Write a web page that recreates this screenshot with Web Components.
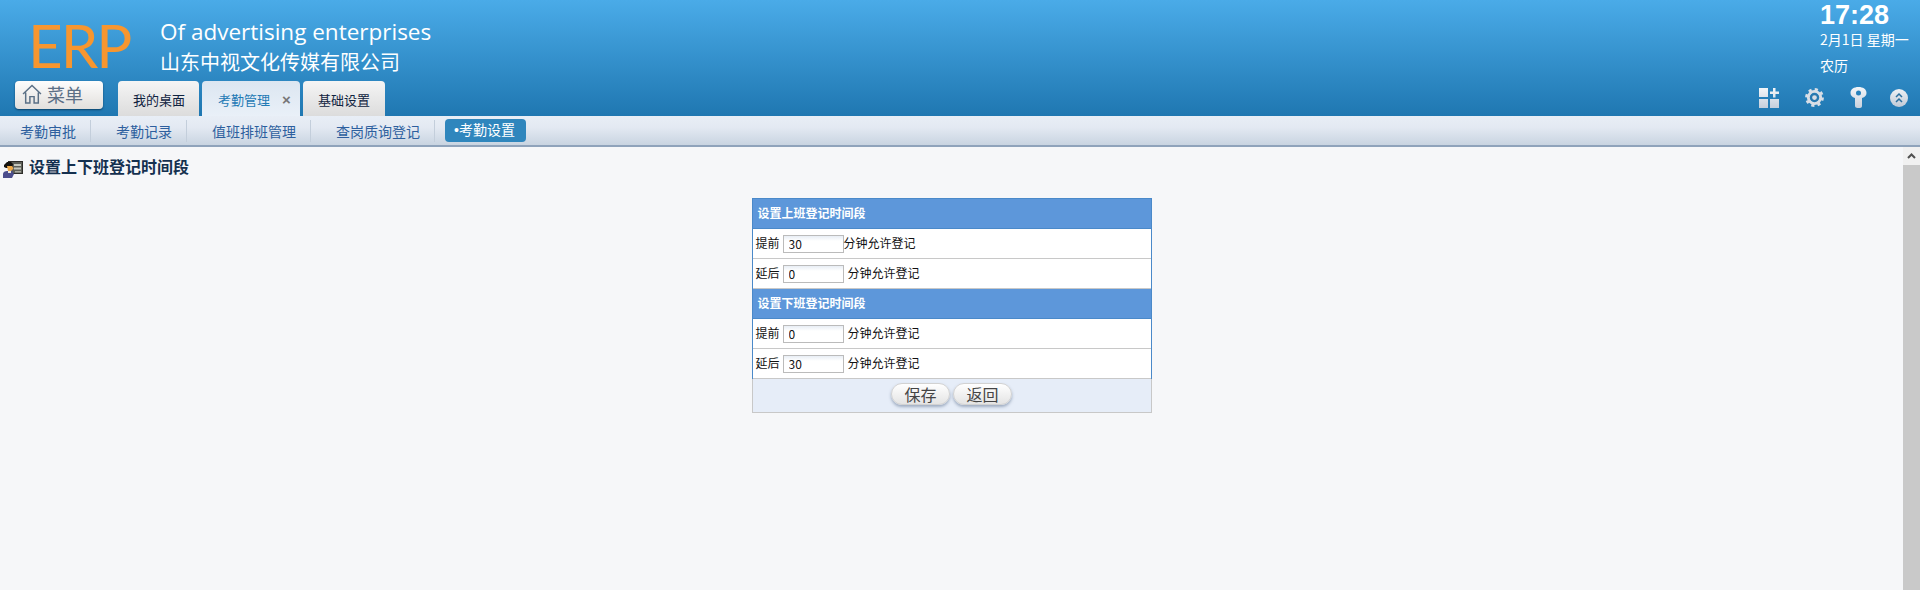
<!DOCTYPE html>
<html lang="zh">
<head>
<meta charset="utf-8">
<title>ERP</title>
<style>
  html, body {
    height: 100%;
    margin: 0;
    overflow: hidden;
  }

  body {
    font-family: 'Noto Sans CJK SC', sans-serif;
  }
</style>
</head>
<body>
<erp-app>
  <erp-header slot="header"></erp-header>
  <erp-subnav slot="subnav">
    <erp-subnav-item width="91">考勤审批</erp-subnav-item>
    <erp-subnav-item width="96">考勤记录</erp-subnav-item>
    <erp-subnav-item width="124">值班排班管理</erp-subnav-item>
    <erp-subnav-item width="124">查岗质询登记</erp-subnav-item>
    <erp-subnav-item active>•考勤设置</erp-subnav-item>
  </erp-subnav>
  <erp-page slot="page" title="设置上下班登记时间段">
    <erp-time-form>
      <erp-form-title>设置上班登记时间段</erp-form-title>
      <erp-form-row label="提前" value="30" tight></erp-form-row>
      <erp-form-row label="延后" value="0"></erp-form-row>
      <erp-form-title>设置下班登记时间段</erp-form-title>
      <erp-form-row label="提前" value="0"></erp-form-row>
      <erp-form-row label="延后" value="30" last></erp-form-row>
      <erp-form-actions>
        <erp-button>保存</erp-button>
        <erp-button>返回</erp-button>
      </erp-form-actions>
    </erp-time-form>
  </erp-page>
</erp-app>

<script>
// Small helper, every element here is only markup and styles
function shadow( host, html ) {
  const template = document.createElement( 'template' );
  template.innerHTML = html;
  const root = host.attachShadow( {mode: 'open'} );
  root.appendChild( template.content.cloneNode( true ) );
  return root;
}

class ErpApp extends HTMLElement {
  constructor() {
    super();
    shadow( this, `
      <style>
        :host {
          display: flex;
          flex-direction: column;
          height: 590px;
          width: 1920px;
        }

        .page {
          display: flex;
          flex: 1;
          min-height: 0;
        }
      </style>
      <slot name="header"></slot>
      <slot name="subnav"></slot>
      <div class="page">
        <slot name="page"></slot>
      </div>
    ` );
  }
}

class ErpHeader extends HTMLElement {
  constructor() {
    super();
    shadow( this, `
      <style>
        :host {
          background: linear-gradient( #4aabe8, #1f77b1 );
          box-sizing: border-box;
          display: flex;
          flex-direction: column;
          height: 116px;
        }

        .top {
          display: flex;
          height: 81px;
          justify-content: space-between;
        }

        .brand {
          display: flex;
        }

        .logo {
          color: #f7962f;
          font-family: 'Lato', sans-serif;
          font-size: 60px;
          font-weight: 400;
          letter-spacing: -2px;
          line-height: 60px;
          margin: 15px 0 0 28px;
          width: 132px;
        }

        .company {
          color: #fff;
          margin-top: 16px;
        }

        .en {
          font-family: 'Open Sans', sans-serif;
          font-size: 22.5px;
          line-height: 32px;
        }

        .cn {
          font-size: 20px;
          line-height: 28px;
        }

        .clock {
          color: #fff;
          width: 100px;
        }

        .time {
          font-family: 'Liberation Sans', sans-serif;
          font-size: 27px;
          font-weight: 700;
          line-height: 30px;
        }

        .date,
        .lunar {
          font-size: 14px;
          line-height: 26px;
        }

        .date {
          margin-top: -4px;
          white-space: nowrap;
        }

        .bottom {
          align-items: flex-end;
          display: flex;
          flex: 1;
        }

        .tabs {
          display: flex;
          gap: 3px;
          margin-left: 15px;
        }

        erp-menu-button {
          margin: 0 0 7px 15px;
        }

        .tools {
          align-items: center;
          display: flex;
          gap: 26px;
          margin: 0 12px 8px auto;
        }
      </style>
      <div class="top">
        <div class="brand">
          <div class="logo">ERP</div>
          <div class="company">
            <div class="en">Of advertising enterprises</div>
            <div class="cn">山东中视文化传媒有限公司</div>
          </div>
        </div>
        <div class="clock">
          <div class="time">17:28</div>
          <div class="date">2月1日 星期一</div>
          <div class="lunar">农历</div>
        </div>
      </div>
      <div class="bottom">
        <erp-menu-button>菜单</erp-menu-button>
        <div class="tabs">
          <erp-tab width="81">我的桌面</erp-tab>
          <erp-tab width="98" active closable>考勤管理</erp-tab>
          <erp-tab width="82">基础设置</erp-tab>
        </div>
        <div class="tools">
          <svg width="20" height="20" viewBox="0 0 20 20">
            <defs><linearGradient id="g" x1="0" y1="0" x2="0" y2="1"><stop offset="0" stop-color="#f4f6f9"/><stop offset="1" stop-color="#c4cedb"/></linearGradient></defs>
            <path fill="url(#g)" d="M0 0h9v9H0zM0 11h9v9H0zM11 11h9v9h-9zM14 0h2.500v3.500H20V6h-3.500v3.500H14V6h-3V3.500h3z"/>
          </svg>
          <svg width="19" height="19" viewBox="0 0 20 20">
            <circle cx="10" cy="10" r="8.200" fill="none" stroke="#d8dee6" stroke-width="3.400" stroke-dasharray="3.200 3.240"/>
            <circle cx="10" cy="10" r="6.500" fill="none" stroke="#d8dee6" stroke-width="3"/>
            <circle cx="10" cy="10" r="3.400" fill="#d8dee6" stroke="#2a78ae" stroke-width="1.800"/>
          </svg>
          <svg width="17" height="21" viewBox="0 0 17 21">
            <defs><linearGradient id="k" x1="0" y1="0" x2="0" y2="1"><stop offset="0" stop-color="#f4f6f9"/><stop offset="1" stop-color="#c8d1dd"/></linearGradient></defs>
            <path fill="url(#k)" fill-rule="evenodd" d="M8.500 0C13 0 16.500 2 16.500 6c0 2.500-1.500 4-4.500 5v8c0 1.200-1 2-2 2H7.500c-1.200 0-2.500-.8-2.500-2v-8C2 10 .5 8.500.5 6 .5 2 4 0 8.500 0zM8.500 3.500a2.500 2.500 0 1 0 0 5 2.500 2.500 0 0 0 0-5z"/>
          </svg>
          <svg width="18" height="18" viewBox="0 0 18 18" style="margin-left: -3px">
            <defs><linearGradient id="c" x1="0" y1="0" x2="0" y2="1"><stop offset="0" stop-color="#eef1f5"/><stop offset="1" stop-color="#bfc9d6"/></linearGradient></defs>
            <circle cx="9" cy="9" r="9" fill="url(#c)"/>
            <path fill="none" stroke="#2a6f9f" stroke-width="1.500" d="M6 8l3-3 3 3M6 13l3-3 3 3"/>
          </svg>
        </div>
      </div>
    ` );
  }
}

class ErpMenuButton extends HTMLElement {
  constructor() {
    super();
    shadow( this, `
      <style>
        :host {
          align-items: center;
          background: linear-gradient( #fdfdfd, #e2dfdc );
          border-radius: 4px;
          box-shadow: 0 1px 2px rgba( 0, 40, 70, 0.7 );
          box-sizing: border-box;
          color: #5b6f86;
          display: flex;
          font-size: 18px;
          gap: 5px;
          height: 28px;
          line-height: 26px;
          padding-bottom: 2px;
          padding-left: 7px;
          width: 88px;
        }

        svg {
          flex: none;
        }
      </style>
      <svg width="20" height="20" viewBox="0 0 19 19" fill="none" stroke="#5b7086" stroke-width="1.400">
        <path d="M1 9.500L9.500 1.500 18 9.500M3.500 8v10h4v-6h4v6h4V8"/>
      </svg>
      <slot></slot>
    ` );
  }
}

class ErpTab extends HTMLElement {
  constructor() {
    super();
    shadow( this, `
      <style>
        :host {
          align-items: center;
          background: linear-gradient( #f5f5f5, #dcdcdc );
          border-radius: 4px 4px 0 0;
          box-sizing: border-box;
          color: #10233f;
          display: flex;
          font-size: 13px;
          height: 35px;
          padding: 2px 0 0 15px;
        }

        :host([active]) {
          background: linear-gradient( #dce6f1, #e9f0f8 );
          color: #1f7ab5;
          padding-left: 16px;
        }

        .close {
          color: #777;
          display: none;
          font-family: 'Liberation Sans', sans-serif;
          font-size: 15px;
          font-weight: 700;
          margin-left: 12px;
        }

        :host([closable]) .close {
          display: block;
        }
      </style>
      <slot></slot>
      <span class="close">×</span>
    ` );
  }

  connectedCallback() {
    this.style.width = `${this.getAttribute( 'width' )}px`;
  }
}

class ErpSubnav extends HTMLElement {
  constructor() {
    super();
    shadow( this, `
      <style>
        :host {
          align-items: center;
          background: linear-gradient( #e8eef6 0%, #e3e9f2 40%, #c9d4e1 100% );
          border-bottom: 2px solid #8fa3bb;
          box-sizing: border-box;
          display: flex;
          height: 31px;
        }
      </style>
      <slot></slot>
    ` );
  }
}

class ErpSubnavItem extends HTMLElement {
  constructor() {
    super();
    shadow( this, `
      <style>
        :host {
          border-right: 1px solid #c3cedb;
          box-sizing: border-box;
          color: #2d5f9e;
          display: block;
          font-size: 14px;
          height: 22px;
          line-height: 22px;
          padding-right: 14px;
          text-align: right;
        }

        :host([active]) {
          background: #2f86bd;
          border: 0;
          border-radius: 4px;
          color: #fff;
          font-family: 'Liberation Sans', 'Noto Sans CJK SC', sans-serif;
          height: 23px;
          line-height: 23px;
          margin-left: 10px;
          padding: 0 0 0 9px;
          text-align: left;
          width: 81px;
        }
      </style>
      <slot></slot>
    ` );
  }

  connectedCallback() {
    if( this.hasAttribute( 'width' ) ) {
      this.style.width = `${this.getAttribute( 'width' )}px`;
    }
  }
}

class ErpPage extends HTMLElement {
  constructor() {
    super();
    const root = shadow( this, `
      <style>
        :host {
          background: #f6f7f9;
          display: flex;
          flex: 1;
          height: 100%;
        }

        .body {
          flex: 1;
          min-width: 0;
        }

        .heading {
          align-items: center;
          color: #14304f;
          display: flex;
          font-size: 16px;
          font-weight: 700;
          gap: 6px;
          height: 22px;
          margin: 8px 0 0 3px;
        }

        .heading svg {
          flex: none;
          margin-top: 6px;
        }

        .form {
          display: flex;
          justify-content: center;
          margin-top: 21px;
        }

        .scrollbar {
          background: #f1f1f1;
          display: flex;
          flex-direction: column;
          flex: none;
          width: 17px;
        }

        .arrow {
          align-items: center;
          display: flex;
          height: 18px;
          justify-content: center;
        }

        .thumb {
          background: #c9c9c9;
          flex: 1;
        }
      </style>
      <div class="body">
        <div class="heading">
          <svg width="20" height="17" viewBox="0 0 20 17">
            <rect x="5" y="0" width="15" height="13" fill="#2e2d2a"/>
            <rect x="6" y="1" width="13" height="11" fill="#5d5f58"/>
            <rect x="11" y="3" width="7" height="2" fill="#c5c7bd"/>
            <rect x="11" y="6.500" width="7" height="2" fill="#c5c7bd"/>
            <rect x="12" y="10" width="6" height="1.500" fill="#a8aaa0"/>
            <path d="M1 4l3-3h4l2 2-1 4H3L1 6z" fill="#14120f"/>
            <path d="M4 5h5l1.500 2.500L8 10H5z" fill="#f0aa4a"/>
            <path d="M0 17v-4c0-2 2-3 4-3h5l2 3-2 4z" fill="#4b4d8c"/>
            <rect x="5" y="10" width="3" height="2" fill="#e8e6de"/>
          </svg>
          <span id="title"></span>
        </div>
        <div class="form"><slot></slot></div>
      </div>
      <div class="scrollbar">
        <div class="arrow">
          <svg width="9" height="6" viewBox="0 0 9 6"><path d="M1 5l3.500-3.500L8 5" fill="none" stroke="#505050" stroke-width="2"/></svg>
        </div>
        <div class="thumb"></div>
      </div>
    ` );

    // Elements
    this.$title = root.querySelector( '#title' );
  }

  connectedCallback() {
    this.$title.textContent = this.getAttribute( 'title' );
    this.removeAttribute( 'title' );
  }
}

class ErpTimeForm extends HTMLElement {
  constructor() {
    super();
    shadow( this, `
      <style>
        :host {
          border: 1px solid #4a89c9;
          border-bottom: 0;
          box-sizing: border-box;
          display: flex;
          flex-direction: column;
          width: 400px;
        }
      </style>
      <slot></slot>
    ` );
  }
}

class ErpFormTitle extends HTMLElement {
  constructor() {
    super();
    shadow( this, `
      <style>
        :host {
          background: #5d97da;
          border-bottom: 1px solid #4a89c9;
          box-sizing: border-box;
          color: #fff;
          display: block;
          font-size: 12px;
          font-weight: 700;
          height: 30px;
          line-height: 27px;
          padding-left: 5px;
        }
      </style>
      <slot></slot>
    ` );
  }
}

class ErpFormRow extends HTMLElement {
  constructor() {
    super();
    const root = shadow( this, `
      <style>
        :host {
          align-items: center;
          background: #fff;
          border-bottom: 1px solid #c8c8c8;
          box-sizing: border-box;
          color: #111;
          display: flex;
          font-size: 12px;
          height: 30px;
          padding-left: 3px;
        }

        span {
          line-height: 16px;
          margin-top: -2px;
        }

        input {
          background: linear-gradient( #e8eef5, #fff 5px );
          border: 1px solid #bbb;
          box-sizing: border-box;
          color: #111;
          font-family: inherit;
          font-size: 12px;
          height: 18px;
          margin: 0 4px 0 3px;
          outline: none;
          padding: 0 0 0 5px;
          width: 61px;
        }

        :host([tight]) input {
          margin-right: 0;
        }
      </style>
      <span id="label"></span>
      <input type="text">
      <span>分钟允许登记</span>
    ` );

    // Elements
    this.$label = root.querySelector( '#label' );
    this.$input = root.querySelector( 'input' );
  }

  connectedCallback() {
    this.$label.textContent = this.getAttribute( 'label' );
    this.$input.setAttribute( 'value', this.getAttribute( 'value' ) );
  }
}

class ErpFormActions extends HTMLElement {
  constructor() {
    super();
    shadow( this, `
      <style>
        :host {
          align-items: flex-start;
          background: #e6edf8;
          border: 1px solid #c8c8c8;
          border-top: 0;
          box-sizing: border-box;
          display: flex;
          gap: 3px;
          height: 34px;
          justify-content: center;
          margin: 0 -1px;
          padding-top: 4px;
        }
      </style>
      <slot></slot>
    ` );
  }
}

class ErpButton extends HTMLElement {
  constructor() {
    super();
    shadow( this, `
      <style>
        :host {
          background: linear-gradient( #fff, #e4e4e4 );
          border: 1px solid #d2d2d2;
          border-radius: 11px;
          box-shadow: 0 2px 3px rgba( 90, 110, 140, 0.5 );
          box-sizing: border-box;
          color: #444;
          display: block;
          font-size: 16px;
          height: 22px;
          line-height: 20px;
          text-align: center;
          width: 59px;
        }
      </style>
      <slot></slot>
    ` );
  }
}

window.customElements.define( 'erp-app', ErpApp );
window.customElements.define( 'erp-header', ErpHeader );
window.customElements.define( 'erp-menu-button', ErpMenuButton );
window.customElements.define( 'erp-tab', ErpTab );
window.customElements.define( 'erp-subnav', ErpSubnav );
window.customElements.define( 'erp-subnav-item', ErpSubnavItem );
window.customElements.define( 'erp-page', ErpPage );
window.customElements.define( 'erp-time-form', ErpTimeForm );
window.customElements.define( 'erp-form-title', ErpFormTitle );
window.customElements.define( 'erp-form-row', ErpFormRow );
window.customElements.define( 'erp-form-actions', ErpFormActions );
window.customElements.define( 'erp-button', ErpButton );
</script>
</body>
</html>
